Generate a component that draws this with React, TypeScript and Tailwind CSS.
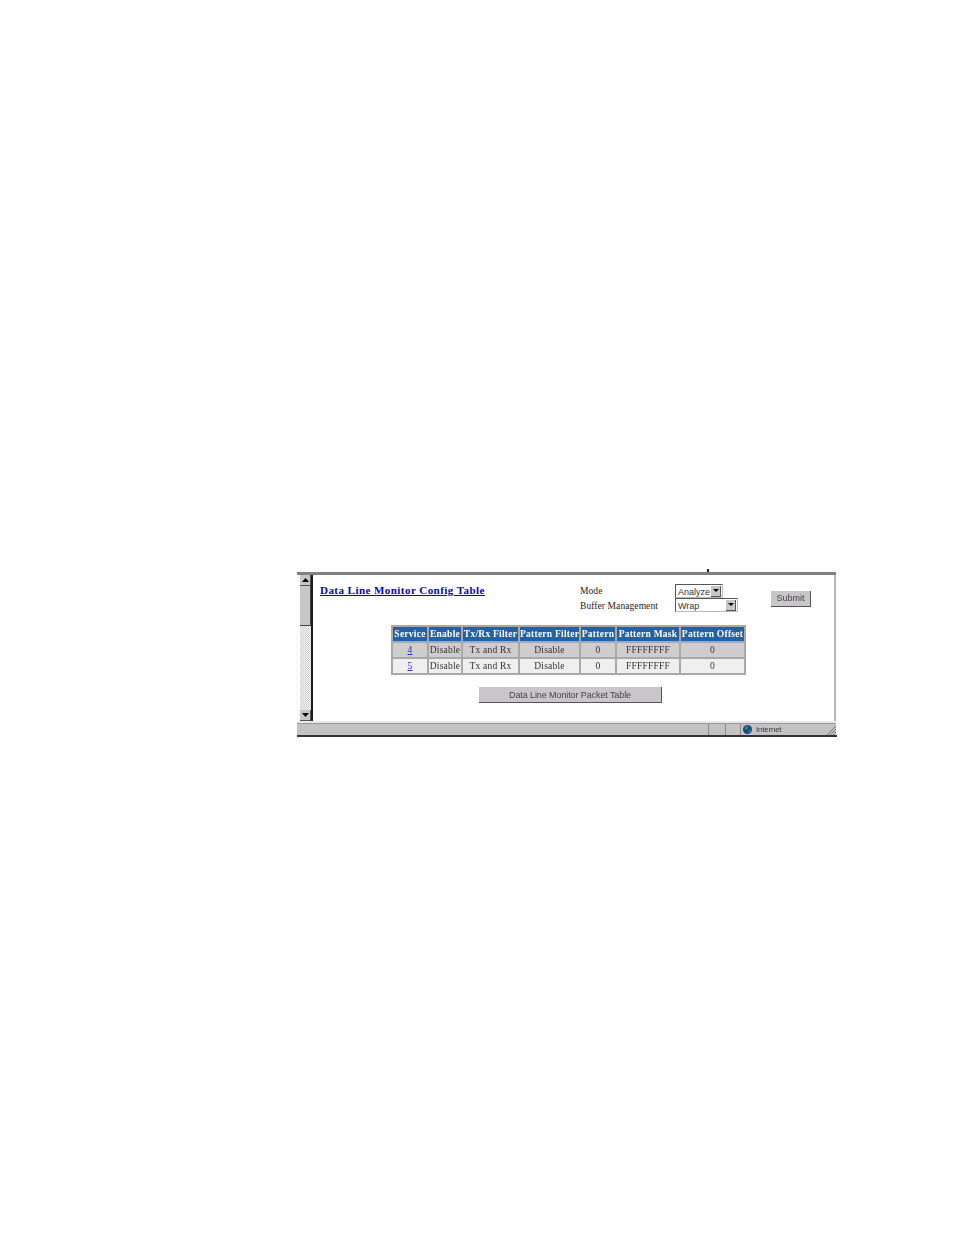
const serif = { fontFamily: '"Liberation Serif", serif' };
const sans = { fontFamily: '"Liberation Sans", sans-serif' };

const headers = [
  ['Service', 'w-[36px]'],
  ['Enable', 'w-[34px]'],
  ['Tx/Rx Filter', 'w-[57px]'],
  ['Pattern Filter', 'w-[61px]'],
  ['Pattern', 'w-[36px]'],
  ['Pattern Mask', 'w-[64px]'],
  ['Pattern Offset', 'w-[65px]'],
];

const rows = [
  { id: '4', bg: 'bg-[#cdcdcd]' },
  { id: '5', bg: 'bg-[#efefef]' },
];

function Arrow({ down }: { down?: boolean }) {
  return (
    <div className="w-[11px] h-[11px] bg-[#c8c6c8] border-r border-b border-r-[#555] border-b-[#555] flex items-center justify-center">
      <svg width="7" height="4" viewBox="0 0 7 4">
        <path d={down ? 'M0 0h7L3.5 4z' : 'M0 4h7L3.5 0z'} fill="#000" />
      </svg>
    </div>
  );
}

function Select({ label, width }: { label: string; width: string }) {
  return (
    <div className={`${width} h-[14px] bg-white border border-t-[#555] border-l-[#555] border-r-[#bbb] border-b-[#bbb] flex items-center justify-between`}>
      <span className="pl-[2px] pt-[2px] text-[9px] leading-none text-[#333]" style={sans}>{label}</span>
      <div className="w-[10px] h-[11px] mr-px bg-[#c8c6c8] border-r border-b border-[#555] flex items-center justify-center">
        <svg width="6" height="3" viewBox="0 0 6 3"><path d="M0 0h6L3 3z" fill="#000" /></svg>
      </div>
    </div>
  );
}

export default function App() {
  return (
    <div className="relative w-[954px] h-[1235px] bg-white pl-[297px] pt-[572px] overflow-hidden">
      <div className="absolute left-[707px] top-[569px] w-[2px] h-[3px] bg-[#222]" />
      <div className="w-[540px] h-[166px] flex flex-col blur-[0.4px]">
        <div className="h-[3px] mr-px bg-[#808080] shrink-0" />
        <div className="flex h-[146px] shrink-0">
          {/* scrollbar */}
          <div className="w-[3px] bg-white" />
          <div className="w-[11px] flex flex-col bg-[repeating-conic-gradient(#cfcfcf_0_25%,#f4f4f4_0_50%)] bg-[length:2px_2px]">
            <Arrow />
            <div className="h-[40px] bg-[#c8c6c8] border-r border-b border-r-[#444] border-b-[#444]" />
            <div className="flex-1" />
            <Arrow down />
          </div>
          <div className="w-[2px] bg-[#1a1a1a]" />
          {/* page */}
          <div className="w-[522px] bg-white pl-[7px]">
            <div className="flex h-[50px]">
              <a
                href="#"
                className="w-[260px] pt-[9px] text-[11px] leading-[13px] font-bold text-[#0000e0] underline tracking-[0.45px]"
                style={serif}
              >
                Data Line Monitor Config Table
              </a>
              <div className="w-[95px] pt-[9px] text-[9.5px] leading-[14.5px] text-[#222] tracking-[0.08px]" style={serif}>
                <div>Mode</div>
                <div>Buffer Management</div>
              </div>
              <div className="w-[96px] pt-[9px] flex flex-col">
                <Select label="Analyze" width="w-[48px]" />
                <Select label="Wrap" width="w-[63px]" />
              </div>
              <div className="pt-[8px]">
                <button
                  className="w-[40px] h-[16px] bg-[#c8c6c8] border-r border-b border-r-[#555] border-b-[#555] text-[9px] leading-none text-[#444]"
                  style={sans}
                >
                  Submit
                </button>
              </div>
            </div>
            <table className="ml-[71px] w-[353px] table-fixed border-collapse" style={serif}>
              <thead>
                <tr className="h-[16px]">
                  {headers.map(([h, w]) => (
                    <th
                      key={h}
                      className={`${w} p-0 pt-px bg-[#1f62aa] border-2 border-[#a8a8a8] text-[9.5px] leading-none font-bold text-white whitespace-nowrap tracking-[0.25px]`}
                    >
                      {h}
                    </th>
                  ))}
                </tr>
              </thead>
              <tbody>
                {rows.map((r) => (
                  <tr key={r.id} className={`h-[16px] ${r.bg} text-[9.5px] leading-none text-[#333] tracking-[0.2px]`}>
                    <td className="p-0 pt-px border-2 border-[#a8a8a8] text-center">
                      <a href="#" className="text-[#2a2ab0] underline">{r.id}</a>
                    </td>
                    <td className="p-0 pt-px border-2 border-[#a8a8a8] text-center">Disable</td>
                    <td className="p-0 pt-px border-2 border-[#a8a8a8] text-center">Tx and Rx</td>
                    <td className="p-0 pt-px border-2 border-[#a8a8a8] text-center">Disable</td>
                    <td className="p-0 pt-px border-2 border-[#a8a8a8] text-center">0</td>
                    <td className="p-0 pt-px border-2 border-[#a8a8a8] text-center">FFFFFFFF</td>
                    <td className="p-0 pt-px border-2 border-[#a8a8a8] text-center">0</td>
                  </tr>
                ))}
              </tbody>
            </table>
            <button
              className="block ml-[159px] mt-[12px] pt-px w-[183px] h-[16px] bg-[#c8c6c8] border-r border-b border-r-[#555] border-b-[#555] text-[9px] leading-none text-[#444] tracking-[-0.1px]"
              style={sans}
            >
              Data Line Monitor Packet Table
            </button>
          </div>
          <div className="w-[2px] bg-[#b8b8b8]" />
          <div className="w-px bg-white" />
        </div>
        {/* status bar */}
        <div className="h-[2px] mr-px bg-[#e8e8e8] shrink-0" />
        <div className="h-[12px] mr-px shrink-0 flex bg-[#c4c2c4] border-t border-t-[#999]">
          <div className="w-[411px] shrink-0" />
          <div className="w-[17px] shrink-0 border-l border-[#8a8a8a]" />
          <div className="w-[15px] shrink-0 border-l border-[#8a8a8a]" />
          <div className="w-[86px] shrink-0 border-l border-[#8a8a8a] pl-[2px] flex items-center gap-[4px]">
            <svg className="shrink-0" width="9" height="9" viewBox="0 0 9 9">
              <circle cx="4.5" cy="4.5" r="4.5" fill="#1c3f9c" />
              <path d="M2 1.5 5 1 5.5 3 3.5 5 1.5 4zM5.5 5 8 4.5 7 8 5.5 7.5z" fill="#1f9a3a" />
            </svg>
            <span className="text-[7.5px] leading-none text-[#333]" style={sans}>Internet</span>
          </div>
          <div className="flex-1 flex items-end justify-end">
            <svg width="9" height="9" viewBox="0 0 9 9">
              <path d="M0 9 9 0M3 9l6-6M6 9l3-3" stroke="#777" strokeWidth="1" />
            </svg>
          </div>
        </div>
        <div className="h-[2px] bg-[#333] shrink-0" />
      </div>
    </div>
  );
}
